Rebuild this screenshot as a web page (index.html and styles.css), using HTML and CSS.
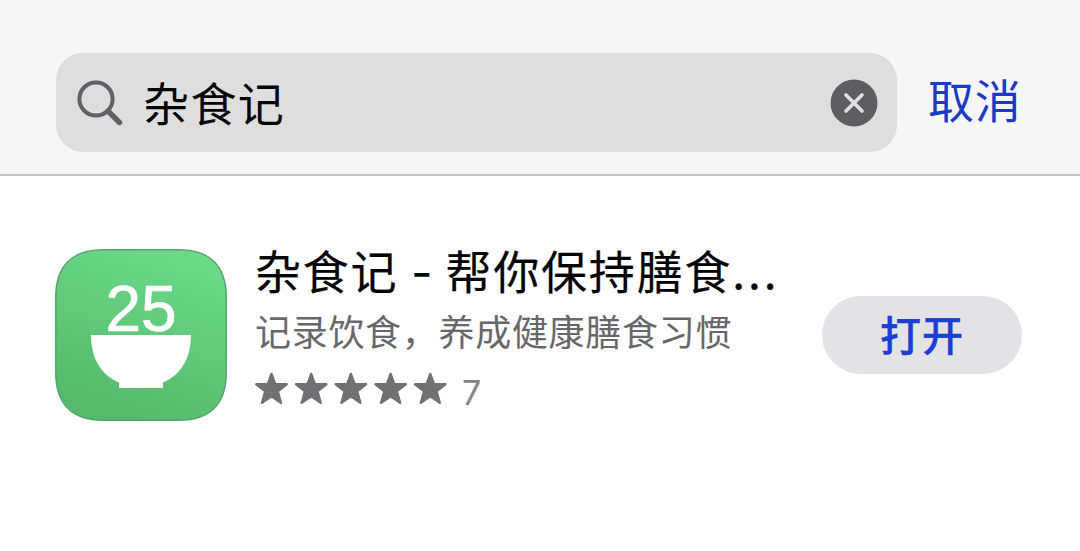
FILE: index.html
```html
<!DOCTYPE html>
<html lang="zh-CN">
<head>
    <meta charset="UTF-8">
    <meta name="viewport" content="width=device-width, initial-scale=1.0">
    <title>杂食记</title>
    <link rel="stylesheet" href="styles.css">
</head>
<body>
    <header class="search-header">
        <div class="search-box">
            <svg class="search-icon" viewBox="0 0 46 46">
                <circle cx="19" cy="19" r="16.6" fill="none" stroke="#616163" stroke-width="4"/>
                <path d="M31 31L42.5 42.5" stroke="#616163" stroke-width="5.4" stroke-linecap="round"/>
            </svg>
            <span class="search-text">杂食记</span>
            <svg class="clear-icon" viewBox="0 0 48 48">
                <circle cx="24" cy="24" r="23.5" fill="#5d5d62"/>
                <path d="M16 16L32 32M32 16L16 32" stroke="#e0e0e2" stroke-width="3.7" stroke-linecap="round"/>
            </svg>
        </div>
        <a class="cancel">取消</a>
    </header>

    <main class="result">
        <svg class="app-icon" viewBox="0 0 172 172">
            <defs>
                <linearGradient id="green" x1="0.75" y1="0" x2="0.4" y2="1">
                    <stop offset="0" stop-color="#6dda8b"/>
                    <stop offset="0.45" stop-color="#62cb7d"/>
                    <stop offset="1" stop-color="#54b96c"/>
                </linearGradient>
            </defs>
            <path d="M48 .8H124C155 .8 171.2 17 171.2 48V124C171.2 155 155 171.2 124 171.2H48C17 171.2 .8 155 .8 124V48C.8 17 17 .8 48 .8Z" fill="url(#green)" stroke="#55a56b" stroke-width="1.5"/>
            <text class="app-number" x="86" y="82" text-anchor="middle">25</text>
            <path d="M36 86H136C136 109 126 126 108 133.5V139H64V133.5C46 126 36 109 36 86Z" fill="#fff"/>
        </svg>

        <div class="info">
            <h1 class="title">杂食记<span class="dash"> - </span>帮你保持膳食<span class="dots">...</span></h1>
            <p class="subtitle">记录饮食，养成健康膳食习惯</p>
            <div class="rating">
                <svg class="stars" viewBox="0 0 194 34">
                    <defs>
                        <path id="star" d="M16.5 2L20.3 12.3H31.7L22.7 19.2L26 30.8L16.5 24.3L7 30.8L10.3 19.2L1.3 12.3H12.7Z" fill="#717173" stroke="#717173" stroke-width="2.4" stroke-linejoin="round"/>
                    </defs>
                    <use href="#star"/>
                    <use href="#star" x="39.7"/>
                    <use href="#star" x="79.4"/>
                    <use href="#star" x="119.1"/>
                    <use href="#star" x="158.8"/>
                </svg>
                <span class="count">7</span>
            </div>
        </div>

        <button class="open-btn">打开</button>
    </main>
</body>
</html>
```
FILE: styles.css
```css
* {
    margin: 0;
    padding: 0;
    box-sizing: border-box;
}

body {
    font-family: "Noto Sans CJK SC", sans-serif;
    background-color: #fff;
    color: #050505;
    overflow: hidden;
}

/* Search bar */
.search-header {
    display: flex;
    align-items: flex-start;
    height: 176px;
    padding: 53px 56px 0;
    background-color: #f6f6f7;
    border-bottom: 2px solid #c4c4c6;
}

.search-box {
    display: flex;
    align-items: center;
    width: 841px;
    height: 99px;
    padding: 0 19px 0 21px;
    border-radius: 27px;
    background-color: #dededf;
}

.search-icon {
    width: 46px;
    height: 46px;
}

.search-text {
    flex: 1;
    margin-left: 20px;
    padding-bottom: 4px;
    font-size: 46px;
    line-height: 60px;
    letter-spacing: 1.4px;
}

.clear-icon {
    width: 48px;
    height: 48px;
}

.cancel {
    margin: 15px 0 0 31px;
    font-size: 46px;
    line-height: 60px;
    letter-spacing: 0.8px;
    white-space: nowrap;
    color: #1a3cc4;
}

/* App row */
.result {
    display: flex;
    align-items: flex-start;
    padding: 73px 58px 0 55px;
}

.app-icon {
    flex: none;
    width: 172px;
    height: 172px;
}

.app-number {
    font-family: "Liberation Sans", Arial, sans-serif;
    font-size: 64px;
    fill: #fff;
    stroke: #fff;
    stroke-width: 0.7px;
}

.info {
    flex: 1;
    margin-left: 28px;
    white-space: nowrap;
}

.title {
    height: 53px;
    font-size: 46px;
    font-weight: 400;
    line-height: 40px;
    letter-spacing: 1.8px;
    -webkit-text-stroke: 0.2px #050505;
}

.dash {
    font-family: Inter, sans-serif;
    letter-spacing: 0;
}

.dots {
    letter-spacing: 3px;
}

.subtitle {
    height: 70px;
    font-size: 36px;
    line-height: 56px;
    letter-spacing: 0.7px;
    color: #68686a;
}

.rating {
    display: flex;
    align-items: flex-start;
}

.stars {
    width: 194px;
    height: 34px;
}

.count {
    margin-left: 13px;
    padding-top: 4px;
    font-family: Inter, sans-serif;
    font-size: 34px;
    line-height: 34px;
    color: #858587;
}

.open-btn {
    flex: none;
    width: 200px;
    height: 78px;
    margin-top: 47px;
    padding-bottom: 5px;
    border: none;
    border-radius: 39px;
    background-color: #e3e3e5;
    font-family: inherit;
    font-size: 41px;
    font-weight: 500;
    letter-spacing: 1px;
    color: #1a3fd2;
    -webkit-text-stroke: 0.4px #1a3fd2;
}
```
